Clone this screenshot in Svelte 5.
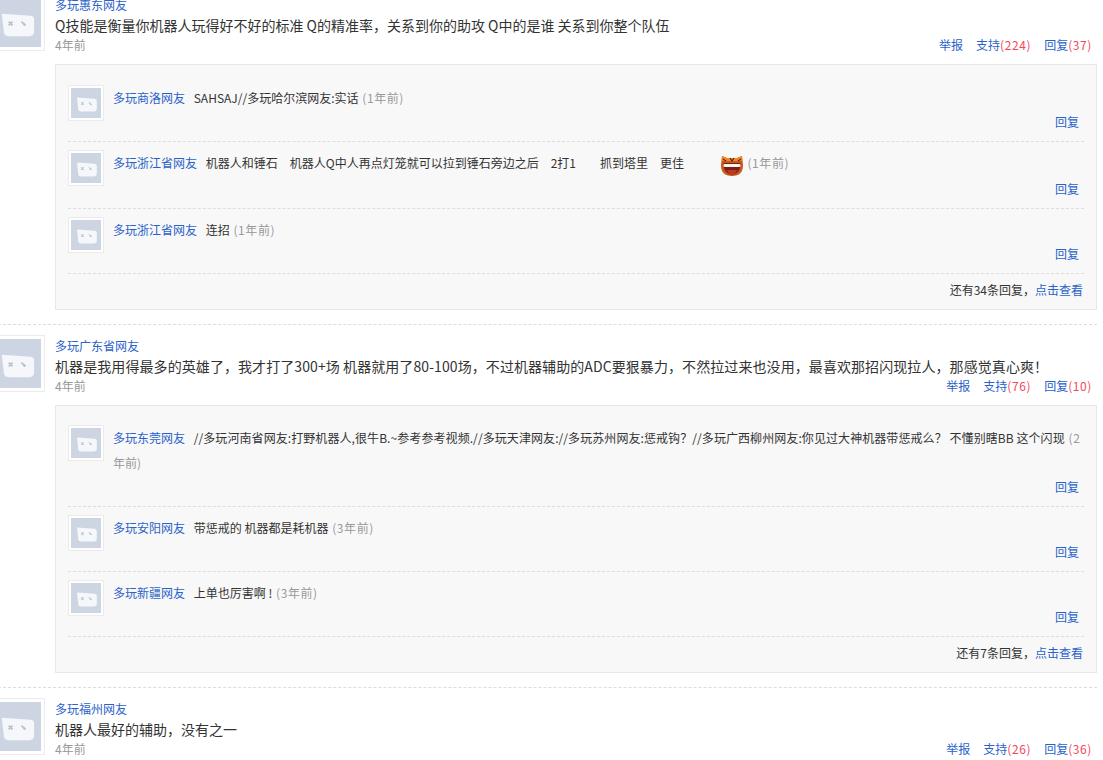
<script>
  const threads = [
    {
      name: '多玩惠东网友',
      text: 'Q技能是衡量你机器人玩得好不好的标准 Q的精准率，关系到你的助攻 Q中的是谁 关系到你整个队伍',
      time: '4年前', up: 224, re: 37, more: 34,
      replies: [
        { name: '多玩商洛网友', parts: [{ t: 'SAHSAJ//多玩哈尔滨网友:实话' }], time: '(1年前)' },
        { name: '多玩浙江省网友', emoji: true, parts: [
          { t: '机器人和锤石' }, { t: '机器人Q中人再点灯笼就可以拉到锤石旁边之后', c: 's' }, { t: '2打1', c: 's' },
          { t: '抓到塔里', c: 'm' }, { t: '更佳', c: 's' } ], time: '(1年前)' },
        { name: '多玩浙江省网友', parts: [{ t: '连招' }], time: '(1年前)' }
      ]
    },
    {
      name: '多玩广东省网友', wide: true,
      text: '机器是我用得最多的英雄了，我才打了300+场 机器就用了80-100场，不过机器辅助的ADC要狠暴力，不然拉过来也没用，最喜欢那招闪现拉人，那感觉真心爽！',
      time: '4年前', up: 76, re: 10, more: 7,
      replies: [
        { name: '多玩东莞网友', parts: [{ t: '//多玩河南省网友:打野机器人,很牛B.~参考参考视频.//多玩天津网友://多玩苏州网友:惩戒钩？//多玩广西柳州网友:你见过大神机器带惩戒么？ 不懂别瞎BB 这个闪现', c: 'w' }], time: '(2', wrapTime: '年前)' },
        { name: '多玩安阳网友', parts: [{ t: '带惩戒的 机器都是耗机器' }], time: '(3年前)' },
        { name: '多玩新疆网友', parts: [{ t: '上单也厉害啊 !' }], time: '(3年前)' }
      ]
    },
    { name: '多玩福州网友', text: '机器人最好的辅助，没有之一', time: '4年前', up: 26, re: 36, more: 0, replies: [] }
  ];
</script>

{#snippet avatar(cls)}
  <div class={cls}>
    <svg viewBox="0 0 50 50" aria-hidden="true">
      <rect width="50" height="50" fill="#cdd5e3" />
      <path d="M10 16 L39 18 Q43 18 43 22 V34 Q43 39 38 39 H17 Q12 39 12 34 Z" fill="#f6f7fa" />
      <path d="M17 24 L21 28 M21 24 L17 28 M30 24 L34 28" stroke="#b9c1d1" stroke-width="1.8" fill="none" />
      <circle cx="33" cy="27" r="1.3" fill="#b9c1d1" />
    </svg>
  </div>
{/snippet}

<div class="page">
  {#each threads as th, i}
    <section class="thread" class:last={i === threads.length - 1}>
      {@render avatar('av big')}
      <div class="main">
        <a class="uname" href="#u">{th.name}</a>
        <p class="body" class:wide={th.wide}>{th.text}</p>
        <div class="meta">
          <span class="time">{th.time}</span>
          <span class="actions">
            <a href="#r">举报</a>
            <a href="#s">支持<em>({th.up})</em></a>
            <a href="#h">回复<em>({th.re})</em></a>
          </span>
        </div>
        {#if th.replies.length}
          <div class="panel" class:tight={th.wide}>
            {#each th.replies as r}
              <div class="item">
                {@render avatar('av small')}
                <div class="ibody">
                  <p class="itext">
                    <a class="iname" href="#u">{r.name}</a>
                    {#each r.parts as p}<span class="seg {p.c ?? ''}">{p.t}</span>{/each}
                    {#if r.emoji}
                      <svg class="emoji" viewBox="0 0 24 24" aria-hidden="true">
                        <path d="M2 3 L7 5 H17 L22 3 L23 12 Q23 23 12 23 Q1 23 1 12 Z" fill="#c9571c" />
                        <path d="M2 3 L7 5 H17 L22 3 L22.5 8 H1.5 Z" fill="#ee8a25" />
                        <path d="M10 5 L12 8 L14 5 M3 6 L6 8 M21 6 L18 8" stroke="#5b2a12" stroke-width="1.2" fill="none" />
                        <path d="M3.5 10 H20.5 Q20.5 21 12 21.5 Q3.5 21 3.5 10 Z" fill="#7d1f17" />
                        <rect x="3.5" y="11" width="17" height="3" rx="1" fill="#fbf4ee" />
                        <path d="M7 17 H17 L15 21 H9 Z" fill="#b93a28" />
                      </svg>
                    {/if}
                    <span class="time t">{r.time}</span>{#if r.wrapTime}<br /><span class="time">{r.wrapTime}</span>{/if}
                  </p>
                  <div class="ireply"><a href="#h">回复</a></div>
                </div>
              </div>
            {/each}
            <div class="more">还有{th.more}条回复，<a href="#m">点击查看</a></div>
          </div>
        {/if}
      </div>
    </section>
  {/each}
</div>

<style>
  :global(body) {
    margin: 0;
    background: #fff;
    overflow: hidden;
  }
  .page {
    margin: -6px 6px 0 -12px;
    font-family: "Noto Sans CJK SC", "Noto Sans", sans-serif;
    font-size: 12px;
    color: #333;
  }
  a {
    color: #2a62c9;
    text-decoration: none;
  }
  p {
    margin: 0;
  }
  .thread {
    display: flex;
    gap: 10px;
    padding-bottom: 14px;
    margin-bottom: 10px;
    border-bottom: 1px dashed #ddd;
  }
  .thread.last {
    border-bottom: 0;
  }
  .av {
    flex: none;
    box-sizing: border-box;
    border: 1px solid #ebebeb;
    background: #fff;
  }
  .av svg {
    display: block;
    width: 100%;
    height: 100%;
  }
  .big {
    width: 57px;
    height: 57px;
    padding: 3px;
  }
  .small {
    width: 36px;
    height: 36px;
    padding: 2px;
  }
  .main {
    flex: 1;
    min-width: 0;
  }
  .uname {
    display: block;
    line-height: 21px;
  }
  .body {
    font-size: 14px;
    line-height: 21px;
  }
  .body.wide {
    letter-spacing: 0.08px;
  }
  .meta {
    display: flex;
    justify-content: space-between;
    align-items: center;
    line-height: 17px;
    padding-right: 5px;
    margin-bottom: 11px;
  }
  .time {
    color: #999;
  }
  .t {
    margin-left: 1px;
    letter-spacing: 0.6px;
  }
  .actions {
    display: flex;
    gap: 13px;
  }
  em {
    font-style: normal;
    color: #f5475b;
    letter-spacing: 0.6px;
  }
  .panel {
    border: 1px solid #e8e8e8;
    background: #f8f8f8;
    padding: 12px 12px 0 12px;
  }
  .panel.tight {
    padding-top: 11px;
  }
  .item {
    display: flex;
    gap: 9px;
    padding: 8px 0 10px;
    border-bottom: 1px dashed #ddd;
  }
  .ibody {
    flex: 1;
    min-width: 0;
  }
  .itext {
    line-height: 25px;
  }
  .iname {
    margin-right: 6px;
  }
  .seg.s {
    margin-left: 12px;
  }
  .seg.m {
    margin-left: 24px;
  }
  .seg.w {
    letter-spacing: 0.075px;
  }
  .emoji {
    width: 24px;
    height: 24px;
    margin-left: 33px;
    vertical-align: middle;
  }
  .ireply {
    margin-top: 3px;
    line-height: 18px;
    text-align: right;
    padding-right: 5px;
  }
  .more {
    line-height: 31px;
    padding: 0 1px 4px 0;
    text-align: right;
  }
</style>
